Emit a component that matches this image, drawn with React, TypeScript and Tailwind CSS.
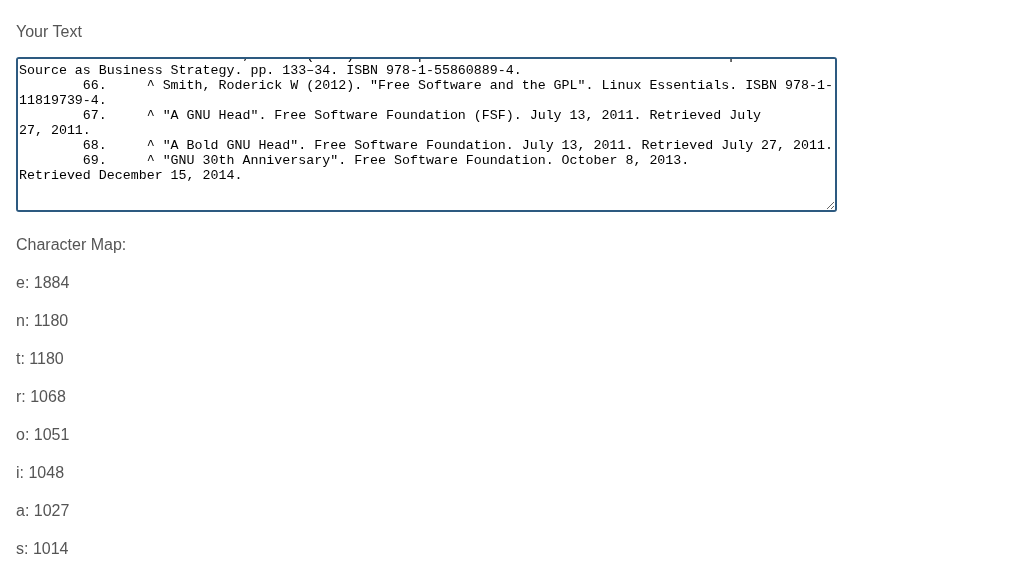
import { useEffect, useRef } from "react";

const sampleText = [
  "\t63.\t^ Stallman, Richard M. (2002). Free Software, Free Society. GNU Press. ISBN 1-882114-98-1.",
  "\t64.\t^ \"GNU's Who\". Free Software Foundation. Retrieved January 11, 2014.",
  "\t65.\t^ Behlendorf, Brian (2005). \"How Open Source Can Still Save the World\". Open",
  "Source as Business Strategy. pp. 133\u201334. ISBN 978-1-55860889-4.",
  "\t66.\t^ Smith, Roderick W (2012). \"Free Software and the GPL\". Linux Essentials. ISBN 978-1-",
  "11819739-4.",
  "\t67.\t^ \"A GNU Head\". Free Software Foundation (FSF). July 13, 2011. Retrieved July",
  "27, 2011.",
  "\t68.\t^ \"A Bold GNU Head\". Free Software Foundation. July 13, 2011. Retrieved July 27, 2011.",
  "\t69.\t^ \"GNU 30th Anniversary\". Free Software Foundation. October 8, 2013.",
  "Retrieved December 15, 2014.",
  "",
  "",
].join("\n");

const charCounts: [string, number][] = [
  ["e", 1884],
  ["n", 1180],
  ["t", 1180],
  ["r", 1068],
  ["o", 1051],
  ["i", 1048],
  ["a", 1027],
  ["s", 1014],
];

export default function App() {
  const areaRef = useRef<HTMLTextAreaElement>(null);

  useEffect(() => {
    // keep the tail of the text in view, like after pasting
    if (areaRef.current) areaRef.current.scrollTop = 57;
  }, []);

  return (
    <div
      className="min-h-screen bg-white px-4 pt-[22px] text-[16px] text-[#555]"
      style={{ fontFamily: '"Liberation Sans", Arial, sans-serif' }}
    >
      <label htmlFor="text" className="block leading-5">
        Your Text
      </label>

      <textarea
        id="text"
        ref={areaRef}
        defaultValue={sampleText}
        spellCheck={false}
        className="mt-[15px] block h-[155px] w-[821px] rounded-[3px] border-2 border-[#2d5a80] bg-white py-[1px] pr-0 pl-[1px] text-[13.3px] leading-[15px] text-black outline-none [tab-size:8]"
        style={{ fontFamily: '"Liberation Mono", "Courier New", monospace' }}
      />

      <p className="mt-[23px] leading-5">Character Map:</p>

      <div className="mt-[18px] flex flex-col gap-[18px]">
        {charCounts.map(([ch, count]) => (
          <p key={ch} className="leading-5">
            {ch}: {count}
          </p>
        ))}
      </div>
    </div>
  );
}
